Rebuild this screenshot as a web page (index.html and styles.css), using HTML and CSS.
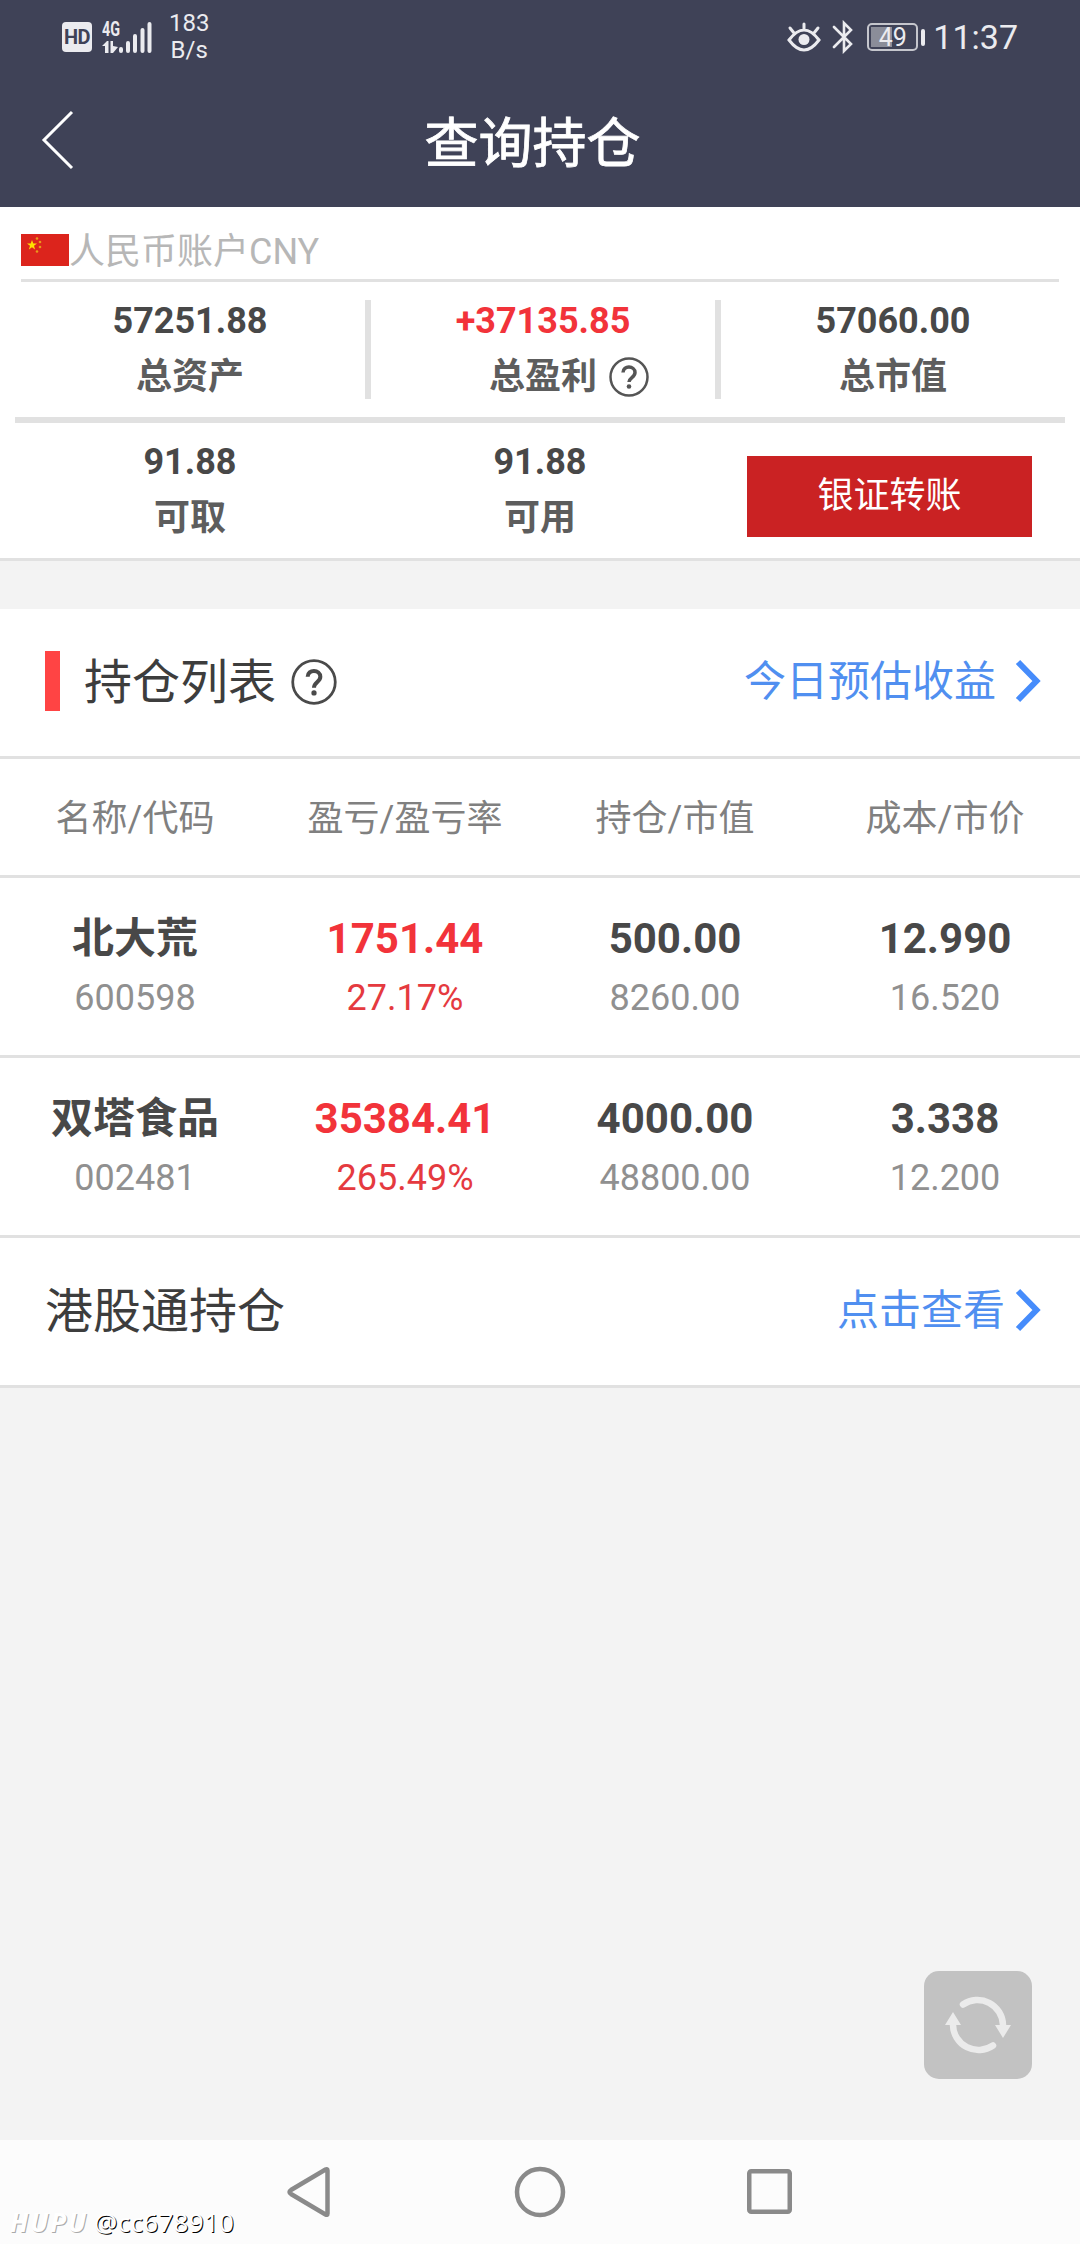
FILE: index.html
```html
<!DOCTYPE html>
<html lang="zh-CN">
<head>
    <meta charset="UTF-8">
    <meta name="viewport" content="width=device-width, initial-scale=1.0">
    <title>查询持仓</title>
    <link rel="stylesheet" href="styles.css">
</head>
<body>
    <header class="header">
        <div class="status-bar">
            <div class="status-left">
                <div class="hd">HD</div>
                <svg class="signal" width="52" height="38" viewBox="0 -4 52 38">
                    <text x="0" y="14" class="signal-text" textLength="18" lengthAdjust="spacingAndGlyphs">4G</text>
                    <path d="M0 24l5-5h1.500v12H3v-7zM8.500 19h2.500v5l5 1-5 6H8.500z" fill="#ebebef"/>
                    <path d="M19 27v2M26 21v8M33 14v15M40.500 8v21M47.500 2v27" stroke="#ebebef" stroke-width="4" stroke-linecap="round"/>
                </svg>
                <div class="speed">183<br>B/s</div>
            </div>
            <div class="status-right">
                <svg width="34" height="32" viewBox="0 0 34 32" fill="none" stroke="#ebebef" stroke-width="3" stroke-linecap="round">
                    <path d="M2 19Q17-1 32 19Q17 39 2 19zM17 3v5M3 7l4 5M31 7l-4 5"/>
                    <circle cx="17" cy="18.500" r="5.500" fill="#ebebef" stroke="none"/>
                </svg>
                <svg class="bluetooth" width="21" height="34" viewBox="0 0 21 34" fill="none" stroke="#ebebef" stroke-width="2.600" stroke-linecap="round">
                    <path d="M2 7l17 17-7 7V3l7 7L2 27"/>
                </svg>
                <div class="battery"><span>49</span></div>
                <div class="battery-tip"></div>
                <div class="time">11:37</div>
            </div>
        </div>
        <div class="title-bar">
            <svg class="back" width="34" height="60" viewBox="0 0 34 60" fill="none" stroke="#fff" stroke-width="3">
                <path d="M31 2L3 30l28 28"/>
            </svg>
            <h1>查询持仓</h1>
        </div>
    </header>

    <main>
        <section class="account">
            <div class="account-name">
                <svg width="48" height="32" viewBox="0 0 48 32">
                    <path d="M0 0h48v32H0z" fill="#dc241c"/>
                    <path d="M11 6l1.300 3.500h3.700l-3 2.300 1.100 3.700-3.100-2.200-3.100 2.200L9 11.800 6 9.500h3.700z" fill="#ffe100"/>
                    <g fill="#e99a1c">
                        <circle cx="16" cy="4.500" r="1.300"/>
                        <circle cx="19" cy="8" r="1.300"/>
                        <circle cx="19" cy="13" r="1.300"/>
                        <circle cx="16" cy="17.500" r="1.300"/>
                    </g>
                </svg>
                <span>人民币账户CNY</span>
            </div>
            <div class="summary">
                <div class="item">
                    <strong>57251.88</strong>
                    <span>总资产</span>
                </div>
                <div class="item">
                    <strong class="red">+37135.85</strong>
                    <span class="with-help">总盈利
                        <svg width="40" height="40" viewBox="0 0 40 40" fill="none" stroke="#555">
                            <circle cx="20" cy="20" r="18.500" stroke-width="2.500"/>
                            <path d="M14 15.500c0-7.500 12-7 12 0 0 5-6 5-6 9.500" stroke-width="3.500"/>
                            <circle cx="20" cy="29.500" r="2.300" fill="#555" stroke="none"/>
                        </svg>
                    </span>
                </div>
                <div class="item">
                    <strong>57060.00</strong>
                    <span>总市值</span>
                </div>
            </div>
            <div class="funds">
                <div class="item">
                    <strong>91.88</strong>
                    <span>可取</span>
                </div>
                <div class="item">
                    <strong>91.88</strong>
                    <span>可用</span>
                </div>
                <button class="btn-transfer">银证转账</button>
            </div>
        </section>

        <section class="positions">
            <div class="list-title">
                <h2>持仓列表</h2>
                <svg class="help" width="46" height="46" viewBox="0 0 40 40" fill="none" stroke="#4a4a4a">
                    <circle cx="20" cy="20" r="18.500" stroke-width="2.400"/>
                    <path d="M14.500 15.500c0-7 11-6.500 11 0 0 4.500-5.500 4.500-5.500 9.500" stroke-width="3.500"/>
                    <circle cx="20" cy="29.500" r="2.300" fill="#4a4a4a" stroke="none"/>
                </svg>
                <a class="link" href="#"><span>今日预估收益</span>
                    <svg width="28" height="44" viewBox="0 0 28 44" fill="none" stroke="#468cfb" stroke-width="6">
                        <path d="M3 3l18.500 19L3 41"/>
                    </svg>
                </a>
            </div>
            <div class="row row-head">
                <div>名称/代码</div>
                <div>盈亏/盈亏率</div>
                <div>持仓/市值</div>
                <div>成本/市价</div>
            </div>
            <div class="row">
                <div><strong>北大荒</strong><span>600598</span></div>
                <div class="red"><strong>1751.44</strong><span>27.17%</span></div>
                <div><strong>500.00</strong><span>8260.00</span></div>
                <div><strong>12.990</strong><span>16.520</span></div>
            </div>
            <div class="row">
                <div><strong>双塔食品</strong><span>002481</span></div>
                <div class="red"><strong>35384.41</strong><span>265.49%</span></div>
                <div><strong>4000.00</strong><span>48800.00</span></div>
                <div><strong>3.338</strong><span>12.200</span></div>
            </div>
            <div class="hk">
                <h2>港股通持仓</h2>
                <a class="link" href="#"><span>点击查看</span>
                    <svg width="28" height="44" viewBox="0 0 28 44" fill="none" stroke="#468cfb" stroke-width="6">
                        <path d="M3 3l18.500 19L3 41"/>
                    </svg>
                </a>
            </div>
        </section>
    </main>

    <button class="refresh">
        <svg width="68" height="60" viewBox="0 0 68 60" fill="none" stroke="#ebebeb" stroke-width="6.500" stroke-linecap="round">
            <path d="M19 9.500A25.500 25.500 0 0 1 59 30M49 50.500A25.500 25.500 0 0 1 9 30"/>
            <path d="M51 30h16l-8 13zM1 30h16L9 17z" fill="#ebebeb" stroke="none"/>
        </svg>
    </button>

    <nav class="nav-bar">
        <svg width="46" height="52" viewBox="0 0 46 52"><path d="M40.500 4.500v43q0 2-2 1L4 28q-3-2 0-4L38.500 3.500q2-1 2 1z"/></svg>
        <svg width="52" height="52" viewBox="0 0 52 52"><circle cx="26" cy="26" r="23"/></svg>
        <svg width="46" height="46" viewBox="0 0 46 46"><rect x="2.250" y="2.250" width="40.500" height="40.500" rx="2"/></svg>
    </nav>
    <div class="watermark"><b>HUPU</b><span>@cc678910</span></div>
</body>
</html>
```
FILE: styles.css
```css
* {
    margin: 0;
    padding: 0;
    box-sizing: border-box;
}

body {
    height: 2244px;
    display: flex;
    flex-direction: column;
    position: relative;
    overflow: hidden;
    background: #f3f3f3;
    color: #484848;
    font-family: Roboto, "Noto Sans CJK SC", sans-serif;
    font-size: 36px;
    line-height: 54px;
}

svg {
    display: block;
    flex-shrink: 0;
}

.header {
    height: 207px;
    background: #3f4257;
    color: #fff;
}

.status-bar {
    height: 74px;
    display: flex;
    justify-content: space-between;
    padding: 0 62px;
    color: #ebebef;
}

.status-left,
.status-right {
    display: flex;
    align-items: center;
}

.hd {
    width: 30px;
    height: 30px;
    border-radius: 4px;
    background: #ebebef;
    color: #3f4257;
    font-size: 20px;
    font-weight: 700;
    line-height: 31px;
    text-align: center;
    letter-spacing: -0.5px;
}

.signal {
    margin-left: 10px;
}

.signal-text {
    fill: #ebebef;
    font-size: 20px;
    font-weight: 700;
}

.speed {
    margin-left: 15px;
    font-size: 24px;
    line-height: 27px;
    text-align: center;
}

.bluetooth {
    margin-left: 11px;
}

.battery {
    width: 51px;
    height: 28px;
    margin-left: 14px;
    border: 2px solid #c5c6cd;
    border-radius: 5px;
    background: linear-gradient(#8b8d99, #8b8d99) 2px 2px / 21px 20px no-repeat;
    font-size: 25px;
    line-height: 25px;
    text-align: center;
}

.battery-tip {
    width: 4px;
    height: 17px;
    margin-left: 3px;
    border-radius: 2px;
    background: #ebebef;
}

.time {
    margin-left: 8px;
    font-size: 34px;
}

.title-bar {
    height: 131px;
    display: flex;
    align-items: center;
    padding-left: 41px;
}

h1 {
    width: 915px;
    padding-top: 10px;
    font-size: 54px;
    font-weight: 400;
    text-align: center;
    -webkit-text-stroke: 0.8px #fff;
}

.account {
    height: 354px;
    padding: 0 15px;
    background: #fff;
    border-bottom: 3px solid #e1e1e1;
}

.account-name {
    height: 75px;
    display: flex;
    align-items: center;
    margin: 0 6px;
    padding-top: 14px;
    border-bottom: 3px solid #e1e1e1;
    color: #b7b7b7;
}

.account-name span {
    padding-top: 4px;
}

.summary,
.funds {
    display: grid;
    grid-template-columns: repeat(3, 350px);
    text-align: center;
}

.summary {
    height: 141px;
    padding: 18px 0;
    border-bottom: 6px solid #e1e1e1;
}

.summary .item + .item {
    border-left: 6px solid #e1e1e1;
}

.funds {
    padding-top: 18px;
}

.item strong,
.item span {
    display: block;
    line-height: 42px;
}

.item span {
    margin-top: 14px;
    color: #5d5d5d;
    font-weight: 700;
}

.item .with-help {
    display: flex;
    align-items: center;
    justify-content: center;
    gap: 12px;
    padding-left: 52px;
}

.red {
    color: #f2333a;
}

.btn-transfer {
    width: 285px;
    height: 81px;
    margin: 15px 0 0 32px;
    padding-bottom: 1px;
    border: none;
    background: #ca2223;
    color: #fff;
    font: inherit;
}

.positions {
    margin-top: 48px;
    background: #fff;
}

.list-title {
    height: 147px;
    display: flex;
    align-items: center;
    padding: 0 37px 3px 45px;
}

.list-title::before {
    content: "";
    width: 15px;
    height: 60px;
    margin-right: 24px;
    background: #ff4444;
}

h2 {
    color: #3d3d3d;
    font-size: 48px;
    font-weight: 400;
}

.list-title h2 {
    padding-top: 3px;
}

.help {
    margin: 2px 0 0 15px;
}

.link {
    display: flex;
    align-items: center;
    gap: 19px;
    margin-left: auto;
    color: #508ff0;
    font-size: 42px;
    text-decoration: none;
}

.link span {
    padding-top: 2px;
}

.row {
    height: 180px;
    display: grid;
    grid-template-columns: repeat(4, 1fr);
    padding-top: 30px;
    border-top: 3px solid #e1e1e1;
    text-align: center;
}

.row-head {
    height: 119px;
    padding-top: 33px;
    color: #808080;
}

.row strong,
.row span {
    display: block;
}

.row strong {
    font-size: 42px;
    line-height: 62px;
}

.row span {
    margin-top: 1px;
    color: #909090;
}

.row .red span {
    color: #e53a3f;
}

.hk {
    height: 153px;
    display: flex;
    align-items: center;
    padding: 0 37px 0 45px;
    border-top: 3px solid #e1e1e1;
    border-bottom: 3px solid #e1e1e1;
}

.hk .link {
    gap: 10px;
    padding-bottom: 3px;
}

.refresh {
    position: absolute;
    right: 48px;
    bottom: 165px;
    width: 108px;
    height: 108px;
    display: flex;
    align-items: center;
    justify-content: center;
    border: none;
    border-radius: 15px;
    background: #c2c2c2;
}

.nav-bar {
    height: 104px;
    display: flex;
    align-items: center;
    justify-content: center;
    gap: 181px;
    margin-top: auto;
    background: #fcfcfc;
}

.nav-bar svg {
    fill: none;
    stroke: #8a8a8a;
    stroke-width: 4.5;
}

.watermark {
    position: absolute;
    left: 10px;
    bottom: 5px;
    display: flex;
    color: #fff;
    font-family: "Noto Sans", sans-serif;
    font-size: 26px;
    line-height: 34px;
    text-shadow: 1px 1px 0 #000;
}

.watermark b {
    width: 84px;
    font-style: italic;
    letter-spacing: 2px;
    text-shadow: 1px 1px 0 #aaa;
}

.watermark span {
    letter-spacing: 0.3px;
}
```
